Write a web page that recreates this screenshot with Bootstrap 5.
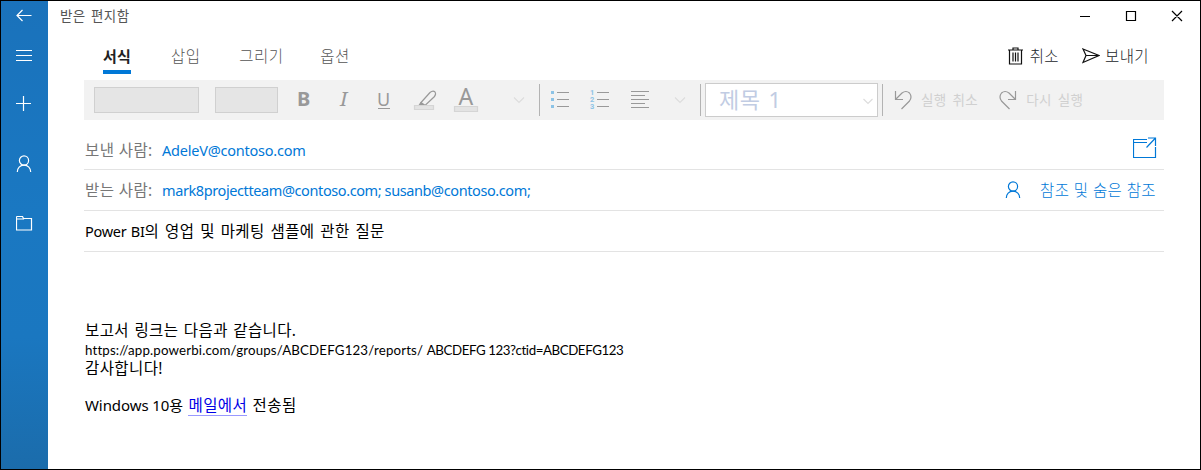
<!DOCTYPE html>
<html lang="ko">
<head>
<meta charset="utf-8">
<meta name="viewport" content="width=device-width, initial-scale=1">
<title>받은 편지함</title>
<link href="https://cdn.jsdelivr.net/npm/bootstrap@5.3.0/dist/css/bootstrap.min.css" rel="stylesheet">
<style>
body{font-family:"Noto Sans","Noto Sans CJK KR",sans-serif;font-size:15.5px;line-height:20px;letter-spacing:.4px;color:#000;background:#fff}
.frame{width:1201px;height:470px;border:1px solid #000}
.rail{width:47px;background:linear-gradient(#1a72bb 0,#1a78c2 45%,#1a77c0 72%,#1b6cab 100%)}
.rail svg,.ico{display:block;flex:none;fill:none;stroke-width:1.2;letter-spacing:0}
.rail svg{stroke:#fff;margin-left:15px}
.t{white-space:nowrap;display:inline-block}
.titlebar{height:30px;padding-left:12px;padding-right:17px;font-size:13.5px;word-spacing:1.5px;color:#555}
.tabs{height:49px;padding-left:55px;padding-right:51px;color:#555;font-weight:300}
.tab-on{height:36px;line-height:36px;color:#222;font-weight:700;font-size:15px;background:linear-gradient(#0078d7,#0078d7) bottom/100% 4px no-repeat;width:28px;letter-spacing:.2px}
.tools{height:40px;margin:0 36px;background:#f2f2f2;color:#999}
.fbox{height:26px;background:#e5e5e5;border:1px solid #d0d0d0}
.sep{width:1px;height:32px;background:#b3b3b3}
.stylebox{width:173px;height:34px;border:1px solid #ccc;background:#fff;color:#c1cce3;font-size:22px;word-spacing:2px;padding:0 4px 2px 13px}
.dim{font-size:13.5px;word-spacing:2px;color:#d0d0d0}
.fieldrow{margin:0 36px;height:41px;border-bottom:1px solid #e3e3e3}
.lab{color:#777;width:78px;padding-left:1px}
.blue{color:#0078d7}
.mail{font-size:14.5px;letter-spacing:-.22px}
.mail-long{letter-spacing:-.4px}
.subj{word-spacing:1.4px}
.latin{font-size:14.5px;letter-spacing:-.3px;word-spacing:1px}
.msg{padding:68px 0 0 37px}
.url{font-family:Lato,sans-serif;font-size:13.3px;letter-spacing:.15px}
.tail{letter-spacing:-.42px}
.lk{color:#0000e6;border-bottom:1px solid #99f}
</style>
</head>
<body>
<div class="frame d-flex overflow-hidden">
  <nav class="rail flex-shrink-0 d-flex flex-column">
    <svg width="16" height="14" style="margin-top:8px"><path d="M.5 6.500H15.500M6.500 1L1 6.500L6.500 12"/></svg>
    <svg width="17" height="12" style="margin-top:27px"><path d="M0 .5H16M0 5.500H16M0 10.500H16"/></svg>
    <svg width="16" height="16" style="margin-top:34px"><path d="M0 7.500H15M7.500 0V15"/></svg>
    <svg width="16" height="18" style="margin-top:43px"><circle cx="8" cy="5.500" r="4.600"/><path d="M1.300 17C1.300 13 4 10.200 8 10.200S14.700 13 14.700 17"/></svg>
    <svg width="17" height="15" style="margin-top:43px"><path d="M.5 .500V14H15.500V2.500H7.500L6.500 .500H.5M.5 3H7.500V2"/></svg>
  </nav>
  <main class="flex-grow-1">
    <div class="titlebar d-flex align-items-center">
      <span class="t">받은 편지함</span>
      <svg class="ico ms-auto" width="104" height="12" stroke="#000" stroke-width="1"><path d="M1 6.500H11M47.500 1.500H56.500V10.500H47.500ZM93 1L103 11M103 1L93 11"/></svg>
    </div>
    <div class="tabs d-flex align-items-center">
      <span class="t tab-on">서식</span>
      <span class="t" style="margin-left:40px">삽입</span>
      <span class="t" style="margin-left:39px">그리기</span>
      <span class="t" style="margin-left:37px">옵션</span>
      <svg class="ico ms-auto" width="16" height="18" stroke="#111"><path d="M0 3H15M5 3V1H10V3M1.500 3V17H13.500V3M5 5.500V14.500M7.500 5.500V14.500M10 5.500V14.500"/></svg>
      <span class="t text-dark" style="margin-left:6px">취소</span>
      <svg class="ico" style="margin-left:23px" width="18" height="16" stroke="#111"><path d="M1 1L17 7.500L1 14.500L4 7.500ZM4 7.500H17"/></svg>
      <span class="t text-dark" style="margin-left:5px">보내기</span>
    </div>
    <div class="tools d-flex align-items-center">
      <div class="fbox" style="width:105px;margin-left:10px"></div>
      <div class="fbox" style="width:63px;margin-left:16px"></div>
      <svg class="ico" width="261" height="40" stroke="#999"><g fill="#999" stroke="none" font-family="Noto Sans"><text x="19" y="26" font-size="20" font-weight="700">B</text><text x="62" y="26" font-size="20" font-family="Noto Serif,Liberation Serif" font-style="italic">I</text><text x="99" y="26" font-size="18">U</text><text x="180.500" y="25" font-size="23">A</text></g><path d="M100 28.500H112M143 22.500L152 12.500Q155 10 157 12Q158.500 14 156 17L147 25.500Z"/><path d="M138.500 28.500L142.500 22L148 25.500Z" fill="#999" stroke="none"/><path d="M136.500 25.500H155.500V29.500H136.500ZM176.500 26.500H199.500V31.500H176.500Z" fill="#e3e3e3" stroke="#d5d5d5"/><path d="M236 17.500L241 22.500L246 17.500" stroke="#ddd"/></svg>
      <div class="sep"></div>
      <svg class="ico" width="160" height="40" stroke="#999"><path d="M17 12.500H29M17 19.500H29M17 26.500H29M57 12.500H69M57 19.500H69M57 26.500H69M91 11.500H109M91 15.500H105M91 19.500H109M91 23.500H105M91 27.500H109" stroke-width="1"/><path d="M11 11H14V14H11ZM11 18H14V21H11ZM11 25H14V28H11Z" fill="#8cc3e6" stroke="none"/><g fill="#8cc3e6" stroke="none" font-family="Roboto" font-size="7.500" font-weight="700"><text x="50" y="15">1</text><text x="50" y="22">2</text><text x="50" y="29">3</text></g><path d="M135 17.500L140 22.500L145 17.500" stroke="#ddd"/></svg>
      <div class="sep"></div>
      <div class="stylebox d-flex align-items-center justify-content-between" style="margin:0 4px"><span class="t">제목 1</span><svg class="ico mt-1" width="10" height="7" stroke="#ddd"><path d="M.5 1L5 5.500L9.500 1"/></svg></div>
      <div class="sep"></div>
      <svg class="ico" style="margin-left:11px" width="18" height="20" stroke="#999"><path d="M1.500 1V9.500H9M1.500 9.500L8 3Q12 0 15.500 3Q18.500 7 15.500 11L7.500 19"/></svg>
      <span class="t dim" style="margin-left:9px">실행 취소</span>
      <svg class="ico" style="margin-left:21px" width="18" height="20" stroke="#999"><path d="M16.500 1V9.500H9M16.500 9.500L10 3Q6 0 2.500 3Q-.5 7 2.500 11L10.500 19"/></svg>
      <span class="t dim" style="margin-left:9px">다시 실행</span>
    </div>
    <div class="fieldrow d-flex align-items-center" style="height:40px;margin-top:10px">
      <span class="lab"><span class="t">보낸 사람:</span></span><span class="t blue mail">AdeleV@contoso.com</span>
      <svg class="ico ms-auto" style="margin-right:7px;margin-bottom:3px" width="24" height="22" stroke="#0078d7"><path d="M14 2.500H.5V20.500H22.500V10M.5 5.500H14M15 1H22.500V9M22.500 1L13.500 10.500"/></svg>
    </div>
    <div class="fieldrow d-flex align-items-center">
      <span class="lab"><span class="t">받는 사람:</span></span><span class="t blue mail mail-long">mark8projectteam@contoso.com; susanb@contoso.com;</span>
      <svg class="ico ms-auto" width="16" height="18" stroke="#0078d7"><circle cx="8" cy="5.500" r="4.600"/><path d="M1.300 17C1.300 13 4 10.200 8 10.200S14.700 13 14.700 17"/></svg>
      <span class="t blue fw-light" style="margin-left:19px;margin-right:8px">참조 및 숨은 참조</span>
    </div>
    <div class="fieldrow d-flex align-items-center"><span class="t subj" style="margin-left:1px"><span class="latin">Power BI</span>의 영업 및 마케팅 샘플에 관한 질문</span></div>
    <div class="msg d-flex flex-column align-items-start">
      <span class="t" style="word-spacing:1px">보고서 링크는 다음과 같습니다.</span>
      <span class="t url">https://app.powerbi.com/groups/ABCDEFG123/reports/ <span class="tail">ABCDEFG 123?ctid=ABCDEFG123</span></span>
      <span class="t" style="line-height:17px">감사합니다!</span>
      <div style="margin-top:18px"><span class="t" style="font-size:15px;letter-spacing:-.08px">Windows 10용</span> <span class="t lk" style="line-height:19px;margin:0 1px">메일에서</span> <span class="t">전송됨</span></div>
    </div>
  </main>
</div>
<script src="https://cdn.jsdelivr.net/npm/bootstrap@5.3.0/dist/js/bootstrap.bundle.min.js"></script>
</body>
</html>
